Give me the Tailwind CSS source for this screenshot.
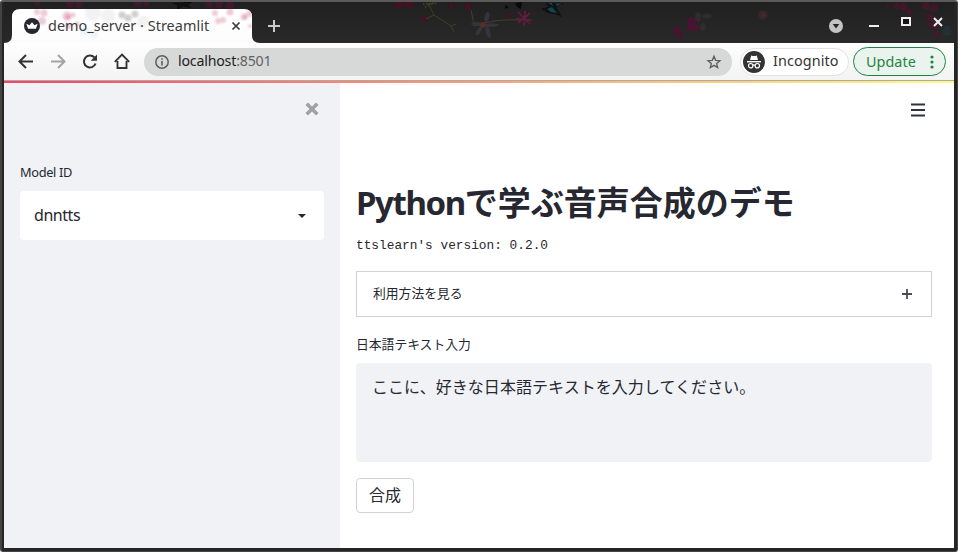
<!DOCTYPE html>
<html lang="ja">
<head>
<meta charset="utf-8">
<title>demo_server · Streamlit</title>
<script src="https://cdn.jsdelivr.net/npm/@tailwindcss/browser@4"></script>
</head>
<body class="w-[958px] h-[552px] overflow-hidden bg-white">
<div class="w-[958px] h-[552px] rounded-[3px] bg-[#252525] border-t-2 border-t-[#5a5a5a] border-l-2 border-l-[#45433f] border-r border-r-[#454545] border-b border-b-[#454545] pl-[2px] pr-[3px] pb-[3px] flex flex-col font-['Noto_Sans','Noto_Sans_CJK_JP',sans-serif]">
  <header class="relative h-[41px] shrink-0 flex items-end">
    <svg class="absolute left-0 top-0" width="950" height="41" viewBox="4 2 950 41">
      <defs><linearGradient id="g" x1="0" y1="0" x2="0" y2="1"><stop offset="0" stop-color="#202020"/><stop offset="1" stop-color="#292929"/></linearGradient><filter id="s"><feGaussianBlur stdDeviation=".6"/></filter></defs>
      <rect x="4" y="2" width="950" height="41" fill="url(#g)"/>
      <g opacity=".75" filter="url(#s)">
      <g fill="#4a1530"><circle cx="37" cy="3" r="3"/><circle cx="70" cy="4" r="4"/><circle cx="79" cy="4" r="4"/><circle cx="138" cy="3" r="4"/><circle cx="146" cy="4" r="3"/><circle cx="209" cy="4" r="4"/><circle cx="219" cy="4" r="4"/><circle cx="230" cy="5" r="4"/></g>
      <path d="M172 3l20-1-4 3 3 3-8-2-6 4v-5z" fill="#070707"/>
      <g fill="#510b25"><circle cx="399" cy="4" r="4.500"/><circle cx="409" cy="4" r="4"/><circle cx="424" cy="19" r="2.800"/><circle cx="468" cy="7" r="3.500"/><circle cx="451" cy="6" r="2.500"/><circle cx="508" cy="16" r="2.300"/></g>
      <path d="M428 3l6 12 17 11 3 6M434 15l-8 4M451 26l5-2M471 10l3 14M484 23q16-4 36-3" stroke="#4a4a25" fill="none"/>
      <path d="M423 4l14-1M425 7l9-4" stroke="#4f4520" stroke-width="2" stroke-dasharray="1.500 1.500"/>
      <g fill="#3c3946"><ellipse cx="477" cy="24" rx="6" ry="2"/><ellipse cx="491" cy="25" rx="8" ry="1.800"/><ellipse cx="487" cy="17" rx="2.300" ry="5" transform="rotate(15 487 17)"/><ellipse cx="488" cy="32" rx="2.300" ry="6" transform="rotate(-15 488 32)"/><ellipse cx="479" cy="31" rx="2" ry="5" transform="rotate(30 479 31)"/></g>
      <circle cx="483" cy="25" r="2.800" fill="#6a3222"/>
      <path d="M516 18.500l16 2M525 11l-1 15M518 12l12 12M530 13l-12 10" stroke="#7a184c" stroke-width="1.700"/>
      <path d="M505 5l4 2-4 2zM515 3l7-1-1 7-4-2z" fill="#000"/>
      <path d="M541 9l7-2-2-4h18l-8 4 6 10-7-3-7-1z" fill="#080808"/><path d="M547 9l5-2 5 6-6-1zM555 3.500h7l-5 2.500zM548 3l4 0 1 3z" fill="#0e5266"/>
      <g fill="#342d33"><ellipse cx="698" cy="17" rx="3" ry="5"/><ellipse cx="707" cy="16" rx="5" ry="2.500"/><ellipse cx="703" cy="27" rx="3" ry="4"/></g>
      <g fill="#541135"><circle cx="692" cy="22" r="4.500"/><circle cx="690" cy="28" r="3"/><circle cx="696" cy="28" r="3"/><circle cx="677" cy="31" r="4"/><circle cx="681" cy="37" r="2.500"/></g>
      <circle cx="763" cy="15" r="4.500" fill="#3f2a2d"/><circle cx="763" cy="15" r="1.800" fill="#5b2930"/>
      <g fill="#48142c"><circle cx="887" cy="6" r="2"/><circle cx="897" cy="6" r="3.500"/><circle cx="904" cy="7" r="4"/><circle cx="909" cy="12" r="3"/><circle cx="926" cy="6" r="4"/><circle cx="934" cy="8" r="4"/><circle cx="934" cy="25" r="5"/><circle cx="930" cy="17" r="3.500"/><circle cx="937" cy="35" r="3"/></g>
      <ellipse cx="947" cy="31" rx="4.500" ry="5" fill="#24363e"/>
      </g>
    </svg>
    <div class="relative w-[256px] h-[34px] -ml-px">
      <svg class="absolute left-0 top-0" width="258" height="34" viewBox="3 9 258 34">
        <defs><linearGradient id="t" x1="0" y1="0" x2="0" y2="1"><stop offset="0" stop-color="#fff"/><stop offset="1" stop-color="#fcfcfc"/></linearGradient><filter id="b"><feGaussianBlur stdDeviation=".9"/></filter><clipPath id="c"><path d="M4 43q8 0 8-8V17q0-8 8-8h224q8 0 8 8v18q0 8 8 8z"/></clipPath></defs>
        <path d="M4 43q8 0 8-8V17q0-8 8-8h224q8 0 8 8v18q0 8 8 8z" fill="url(#t)"/>
        <g clip-path="url(#c)"><g filter="url(#b)">
          <g fill="#edcbd7"><circle cx="37" cy="12" r="3"/><circle cx="44" cy="13" r="3.500"/><circle cx="42" cy="21" r="4"/><circle cx="67" cy="16" r="4.500"/><circle cx="73" cy="15" r="2.500"/><circle cx="68" cy="26" r="3"/><circle cx="77" cy="24" r="2.500"/><circle cx="215" cy="13" r="3"/><circle cx="218" cy="21" r="3"/><circle cx="223" cy="20" r="3"/><circle cx="230" cy="12" r="3.500"/><circle cx="244" cy="17" r="3.500"/><circle cx="249" cy="14" r="3"/><circle cx="250" cy="26" r="2"/></g>
          <circle cx="68" cy="17" r="2.500" fill="#e79bb6"/><circle cx="245" cy="17" r="2" fill="#e7a6bd"/>
          <g fill="#f2f2f2"><circle cx="93" cy="13" r="8"/><circle cx="108" cy="16" r="7"/><circle cx="143" cy="22" r="6"/></g>
          <g fill="#cfcfcf"><circle cx="122" cy="15" r="3.500"/><circle cx="128" cy="18" r="3.500"/><circle cx="135" cy="14" r="3.500"/></g>
          <g fill="#edf3f6"><circle cx="85" cy="31" r="5"/><circle cx="94" cy="34" r="4"/></g>
        </g></g>
      </svg>
      <div class="relative h-full flex items-center pl-[21px]">
        <svg width="16" height="16" viewBox="0 0 16 16" class="shrink-0"><circle cx="8" cy="8" r="8" fill="#262730"/><path d="M2.300 5.800l3.200 1.400L8 4.300l2.500 2.900 3.200-1.400-1.800 4.900H4.100z" fill="#fff"/></svg>
        <span class="ml-[8px] w-[161px] text-[14.400px] tracking-[0.040px] text-[#3c3c3c] whitespace-nowrap">demo_server · Streamlit</span>
        <svg class="ml-[22px]" width="10" height="10" viewBox="0 0 10 10"><path d="M1.500 1.500l7 7M8.500 1.500l-7 7" stroke="#3c3c3c" stroke-width="1.700"/></svg>
      </div>
    </div>
    <svg class="relative ml-[9px] mb-[11px]" width="12" height="12" viewBox="0 0 12 12"><path d="M6 0v12M0 6h12" stroke="#c9c9c9" stroke-width="2"/></svg>
    <svg class="relative ml-auto mb-[10px] mr-[26px]" width="14" height="14" viewBox="0 0 14 14"><circle cx="7" cy="7" r="7" fill="#c4c4c4"/><path d="M3.700 5h6.600L7 9.500z" fill="#262626"/></svg>
    <svg class="relative mr-[10px] mb-[15px]" width="75" height="12" viewBox="0 0 75 12"><path d="M0 10h10" stroke="#eee" stroke-width="2"/><path d="M33 2h8v7h-8z" fill="#201018" stroke="#eee" stroke-width="2"/><path d="M65 2l8 8M73 2l-8 8" stroke="#eee" stroke-width="2"/></svg>
  </header>

  <nav class="h-[37px] shrink-0 bg-linear-to-b from-[#fefefe] to-[#f3f3f3] flex items-center pl-[14px] pr-[8px]">
    <svg width="16" height="16" viewBox="0 0 16 16" fill="none" stroke="#333" stroke-width="2"><path d="M15 7.500H2.500M8 1L1.500 7.500 8 14"/></svg>
    <svg class="ml-[16px]" width="16" height="16" viewBox="0 0 16 16" fill="none" stroke="#a3a3a3" stroke-width="2"><path d="M1 7.500h12.500M8 1L14.500 7.500 8 14"/></svg>
    <svg class="ml-[16px]" width="16" height="16" viewBox="0 0 16 16"><path d="M13.600 9.500A6 6 0 1 1 12.300 3.300" fill="none" stroke="#333" stroke-width="2"/><path d="M15 .5v6.300H8.700z" fill="#333"/></svg>
    <svg class="ml-[16px]" width="16" height="17" viewBox="0 0 16 17"><path d="M.8 8.800L8 1.500l7.200 7.300M3.500 8v7h9V8" fill="none" stroke="#333" stroke-width="1.900"/></svg>
    <div class="ml-[14px] w-[588px] h-[28px] rounded-full bg-[#d7d9d8] flex items-center pl-[11px] pr-[10px]">
      <svg width="14" height="14" viewBox="0 0 14 14"><circle cx="7" cy="7" r="6.200" fill="none" stroke="#5c5e60" stroke-width="1.500"/><path d="M7 6v4.500M7 3.300v1.500" stroke="#5c5e60" stroke-width="1.600"/></svg>
      <span class="ml-[9px] mb-[2px] text-[14.200px] tracking-[-0.200px] text-[#1f1f1f] whitespace-nowrap">localhost<span class="text-[#636363]">:8501</span></span>
      <svg class="ml-auto" width="16" height="16" viewBox="0 0 24 24"><path d="M12 3.500l2.500 6 6.400.5-4.900 4.200 1.500 6.300-5.500-3.400-5.500 3.400L8 14.200 3.100 10l6.400-.5z" fill="none" stroke="#5c5e60" stroke-width="2"/></svg>
    </div>
    <div class="ml-[8px] w-[109px] h-[28px] rounded-full bg-white border border-[#e2e2e2] flex items-center pl-[2px]">
      <svg width="22" height="22" viewBox="0 0 22 22"><circle cx="11" cy="11" r="11" fill="#333"/><path d="M7 9l1.200-4.500q2.800 1 5.600 0L15 9z" fill="#fff"/><path d="M4 10.700h14" stroke="#fff" stroke-width="1.400"/><g fill="none" stroke="#fff" stroke-width="1.200"><circle cx="7.700" cy="14.700" r="2.200"/><circle cx="14.300" cy="14.700" r="2.200"/><path d="M9.900 14.300q1.100-.7 2.200 0"/></g></svg>
      <span class="ml-[8px] mb-[2px] text-[14.400px] tracking-[0.100px] text-[#333] whitespace-nowrap">Incognito</span>
    </div>
    <div class="ml-[4px] w-[93px] h-[29px] rounded-full bg-[#ebf3ee] border border-[#1e8541] flex items-center pl-[12px] pr-[11px]">
      <span class="text-[14.400px] tracking-[0.050px] text-[#1e8541] whitespace-nowrap">Update</span>
      <svg class="ml-auto" width="4" height="14" viewBox="0 0 4 14" fill="#1e8541"><circle cx="2" cy="2" r="1.600"/><circle cx="2" cy="7" r="1.600"/><circle cx="2" cy="12" r="1.600"/></svg>
    </div>
  </nav>
  <div class="h-px shrink-0 bg-[#aaa]"></div>
  <div class="h-[2px] shrink-0 bg-[linear-gradient(90deg,#ff4068,#fffd80)]"></div>

  <div class="flex-1 min-h-0 flex text-[#262730]">
    <aside class="w-[336px] bg-[#f0f2f6] px-[16px] pt-[19px] flex flex-col">
      <svg class="self-end mr-[5px]" width="14" height="14" viewBox="0 0 14 14"><path d="M1.700 1.700l10.600 10.600M12.300 1.700L1.700 12.300" stroke="#a0a1a7" stroke-width="3.500"/></svg>
      <label class="mt-[46px] h-[20px] leading-[20px] text-[12.800px] tracking-[-0.340px] whitespace-nowrap">Model ID</label>
      <div class="mt-[9px] h-[49px] rounded-[4px] bg-white flex items-center pl-[14px] pr-[18px]">
        <span class="mb-[2px] text-[16px] tracking-[-0.450px] whitespace-nowrap">dnntts</span>
        <svg class="ml-auto mt-px" width="8" height="4" viewBox="0 0 8 4"><path d="M0 0h8L4 4z" fill="#262730"/></svg>
      </div>
    </aside>
    <main class="flex-1 min-w-0 bg-white pl-[16px] pr-[22px] pt-[20px] flex flex-col">
      <svg class="self-end mr-[7px]" width="14" height="14" viewBox="0 0 14 14"><path d="M0 1.500h14M0 7h14M0 12.500h14" stroke="#31333f" stroke-width="1.800"/></svg>
      <h1 class="mt-[62px] h-[48px] leading-[48px] text-[33px] font-bold whitespace-nowrap"><span class="tracking-[-1.400px]">Python</span>で学ぶ音声合成のデモ</h1>
      <p class="mt-[9px] h-[20px] leading-[20px] text-[12.800px] font-['Liberation_Mono',monospace]">ttslearn's version: 0.2.0</p>
      <div class="mt-[15px] h-[46px] border border-[#d2d2d4] flex items-center pl-[16px] pr-[19px] text-[12.800px]">利用方法を見る
        <svg class="ml-auto" width="10" height="10" viewBox="0 0 10 10"><path d="M5 0v10M0 5h10" stroke="#4a4b55" stroke-width="1.800"/></svg>
      </div>
      <label class="mt-[17px] h-[20px] leading-[20px] text-[12.800px]">日本語テキスト入力</label>
      <div class="mt-[9px] h-[99px] rounded-[4px] bg-[#f0f2f6] px-[16px] pt-[12px] text-[16px] tracking-[0.050px] leading-[24px] whitespace-nowrap">ここに、好きな日本語テキストを入力してください。</div>
      <button class="mt-[16px] w-[58px] h-[35px] rounded-[4px] border border-[#d2d2d4] pb-[2px] text-[16px] leading-[24px] whitespace-nowrap">合成</button>
    </main>
  </div>
</div>
</body>
</html>
